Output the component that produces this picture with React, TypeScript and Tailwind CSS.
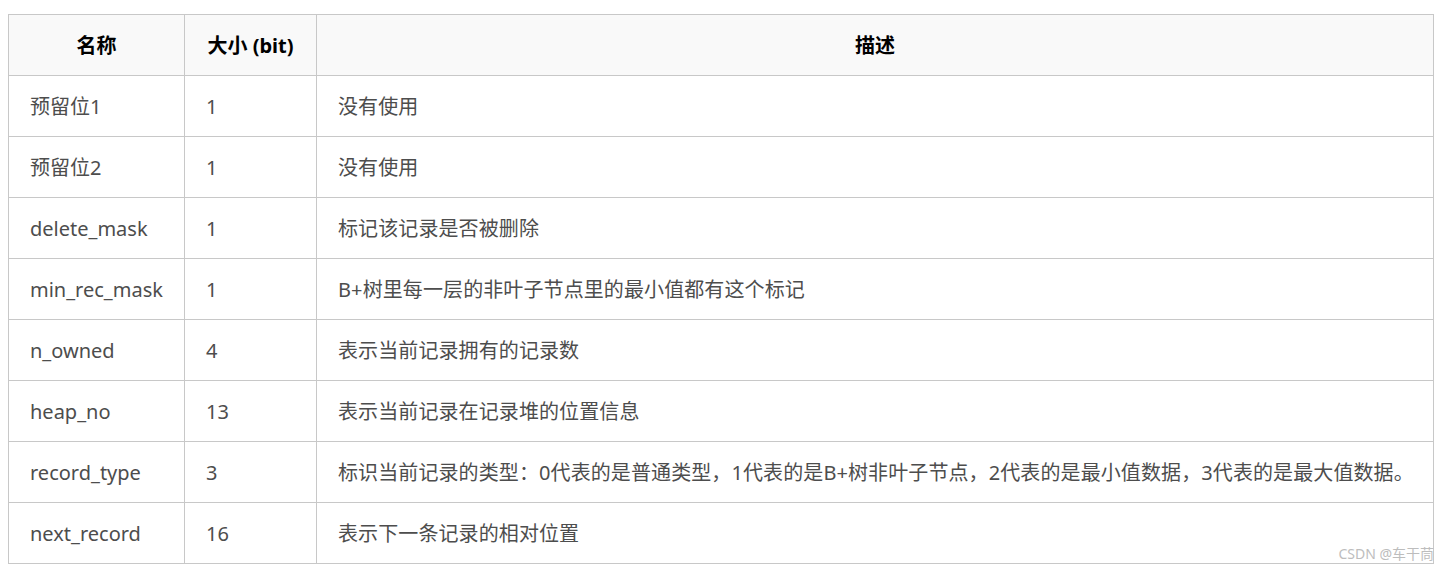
import React from 'react';

const rows: [string, string, string][] = [
  ['预留位1', '1', '没有使用'],
  ['预留位2', '1', '没有使用'],
  ['delete_mask', '1', '标记该记录是否被删除'],
  ['min_rec_mask', '1', 'B+树里每一层的非叶子节点里的最小值都有这个标记'],
  ['n_owned', '4', '表示当前记录拥有的记录数'],
  ['heap_no', '13', '表示当前记录在记录堆的位置信息'],
  [
    'record_type',
    '3',
    '标识当前记录的类型：0代表的是普通类型，1代表的是B+树非叶子节点，2代表的是最小值数据，3代表的是最大值数据。',
  ],
  ['next_record', '16', '表示下一条记录的相对位置'],
];

export default function App() {
  return (
    <div
      className="relative w-[1450px] h-[575px] bg-white pt-[14px] pl-[8px]"
      style={{ fontFamily: '"Noto Sans", "Noto Sans CJK SC", sans-serif' }}
    >
      <table className="w-[1426px] border-collapse text-[20px] text-[#4d4d4d] table-fixed">
        <colgroup>
          <col className="w-[176px]" />
          <col className="w-[132px]" />
          <col />
        </colgroup>
        <thead>
          <tr className="h-[61px] bg-[#f9f9f9]">
            <th className="border border-[#c8c8c8] pt-[2px] font-bold text-[20px] text-black text-center">名称</th>
            <th className="border border-[#c8c8c8] pt-[2px] font-bold text-[20px] text-black text-center">大小 (bit)</th>
            <th className="border border-[#c8c8c8] pt-[2px] font-bold text-[20px] text-black text-center">描述</th>
          </tr>
        </thead>
        <tbody>
          {rows.map(([name, size, desc]) => (
            <tr key={name} className="h-[61px]">
              <td className="border border-[#c8c8c8] px-[21px] pt-[2px] whitespace-nowrap">{name}</td>
              <td className="border border-[#c8c8c8] px-[21px] pt-[2px]">{size}</td>
              <td className="border border-[#c8c8c8] px-[21px] pt-[2px] whitespace-nowrap tracking-[0.1px]">{desc}</td>
            </tr>
          ))}
        </tbody>
      </table>

      {/* watermark */}
      <div className="absolute right-[16px] top-[547px] text-[14px] text-[#bdbdbd] leading-none">
        CSDN @车干茼
      </div>
    </div>
  );
}
